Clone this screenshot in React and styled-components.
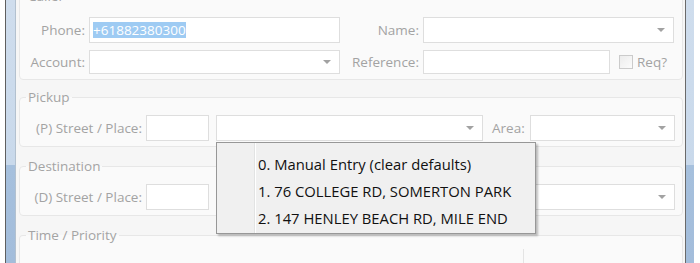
import React from "react";
import styled, { createGlobalStyle } from "styled-components";

const Global = createGlobalStyle`
  html, body { margin: 0; padding: 0; background: #ffffff; }
  body { font-family: "Open Sans", "Noto Sans", sans-serif; }
`;

const Frame = styled.div`
  display: flex;
  width: 700px;
  height: 263px;
  overflow: hidden;
  background: #ffffff;
`;

const Gap = styled.div`
  width: ${(p) => p.$w}px;
  flex: none;
  background: #ffffff;
`;

const Line = styled.div`
  width: 1px;
  flex: none;
  background: ${(p) => p.$c};
`;

const BlueBar = styled.div`
  width: ${(p) => p.$w}px;
  flex: none;
  background: linear-gradient(to bottom, #cfdded 0, #c9d9eb 165px, #a6c0dd 165px, #a3bddb 263px);
`;

const Content = styled.div`
  flex: 1;
  min-width: 0;
  background: #f6f6f6;
  display: flex;
  flex-direction: column;
`;

const Group = styled.fieldset`
  margin: ${(p) => p.$top}px 2px 0 3px;
  padding: ${(p) => p.$pt || 10}px 6px 5px 0;
  min-width: 0;
  border: 1px solid #e7e7e7;
  border-radius: 4px;
  background: #fafafa;
  display: flex;
  flex-direction: column;
  gap: 7px;
  ${(p) => (p.$open ? "flex: 1; border-bottom: none;" : "")}
`;

const Legend = styled.legend`
  margin-left: 6px;
  padding: 0 2px;
  font-size: 13.5px;
  line-height: 16px;
  color: #a4a4a4;
`;

const Row = styled.div`
  display: flex;
  align-items: center;
  height: ${(p) => p.$h || 26}px;
`;

const Label = styled.div`
  width: ${(p) => p.$w}px;
  flex: none;
  text-align: ${(p) => (p.$left ? "left" : "right")};
  margin-right: ${(p) => (p.$mr !== undefined ? p.$mr : 4)}px;
  margin-left: ${(p) => p.$ml || 0}px;
  font-size: 13.5px;
  color: #a3a3a3;
  white-space: nowrap;
`;

const Field = styled.div`
  position: relative;
  box-sizing: border-box;
  width: ${(p) => p.$w}px;
  height: 100%;
  flex: none;
  margin-right: ${(p) => p.$mr || 0}px;
  background: #ffffff;
  border: 1px solid #dedede;
  display: flex;
  align-items: center;
  padding: 0 3px;
  font-size: 13.5px;
`;

const Selected = styled.span`
  background: #9ecbf3;
  color: #ffffff;
  line-height: 16px;
  height: 16px;
  display: inline-block;
`;

const Arrow = styled.span`
  margin-left: auto;
  margin-right: 5px;
  width: 0;
  height: 0;
  border-left: 4px solid transparent;
  border-right: 4px solid transparent;
  border-top: 4px solid #a2a2a2;
`;

const Check = styled.div`
  box-sizing: border-box;
  width: 14px;
  height: 14px;
  flex: none;
  margin: 0 4px 0 9px;
  border: 1px solid #cbcbcb;
  background: linear-gradient(135deg, #ececec, #fbfbfb);
`;

const Divider = styled.div`
  width: 1px;
  height: 30px;
  margin: -4px 0 0 ${(p) => p.$ml}px;
  background: #e4e4e4;
`;

const Popup = styled.div`
  position: absolute;
  top: calc(100% + 2px);
  left: -1px;
  width: 320px;
  box-sizing: border-box;
  z-index: 5;
  border: 1px solid #979797;
  padding: 7px 2px 2px 2px;
  background: linear-gradient(
    to right,
    #f0f0f0 0,
    #f0f0f0 37px,
    #e2e3e3 37px,
    #e2e3e3 38px,
    #ffffff 38px,
    #ffffff 39px,
    #f0f0f0 39px
  );
  box-shadow: 2px 2px 2px rgba(0, 0, 0, 0.25);
`;

const Item = styled.div`
  height: 27px;
  display: flex;
  align-items: center;
  padding-left: 39px;
  font-size: 14.8px;
  color: #111111;
  white-space: nowrap;
`;

const items = [
  "0. Manual Entry (clear defaults)",
  "1. 76 COLLEGE RD, SOMERTON PARK",
  "2. 147 HENLEY BEACH RD, MILE END",
];

function AddressRow({ label, open }) {
  return (
    <Row>
      <Label $w={122}>{label}</Label>
      <Field $w={63} $mr={7} />
      <Field $w={267}>
        <Arrow />
        {open && (
          <Popup>
            {items.map((t) => (
              <Item key={t}>{t}</Item>
            ))}
          </Popup>
        )}
      </Field>
      <Label $w={36} $ml={9} $mr={2} $left>
        Area:
      </Label>
      <Field $w={145}>
        <Arrow />
      </Field>
    </Row>
  );
}

export default function App() {
  return (
    <>
      <Global />
      <Frame>
        <Gap $w={5} />
        <Line $c="#5f5f5f" />
        <BlueBar $w={9} />
        <Line $c="#b3c1cf" />
        <Content>
          <Group $top={-12} $pt={13}>
            <Legend>Caller</Legend>
            <Row>
              <Label $w={65}>Phone:</Label>
              <Field $w={251}>
                <Selected>+61882380300</Selected>
              </Field>
              <Label $w={79}>Name:</Label>
              <Field $w={251}>
                <Arrow />
              </Field>
            </Row>
            <Row $h={24}>
              <Label $w={65}>Account:</Label>
              <Field $w={251}>
                <Arrow />
              </Field>
              <Label $w={79}>Reference:</Label>
              <Field $w={187} />
              <Check />
              <Label $w={40} $left>
                Req?
              </Label>
            </Row>
          </Group>
          <Group $top={9}>
            <Legend>Pickup</Legend>
            <AddressRow label="(P) Street / Place:" open />
          </Group>
          <Group $top={11}>
            <Legend>Destination</Legend>
            <AddressRow label="(D) Street / Place:" />
          </Group>
          <Group $top={11} $open>
            <Legend>Time / Priority</Legend>
            <Row>
              <Divider $ml={503} />
            </Row>
          </Group>
        </Content>
        <Line $c="#6a6a6a" />
        <BlueBar $w={8} />
        <Gap $w={6} />
      </Frame>
    </>
  );
}
